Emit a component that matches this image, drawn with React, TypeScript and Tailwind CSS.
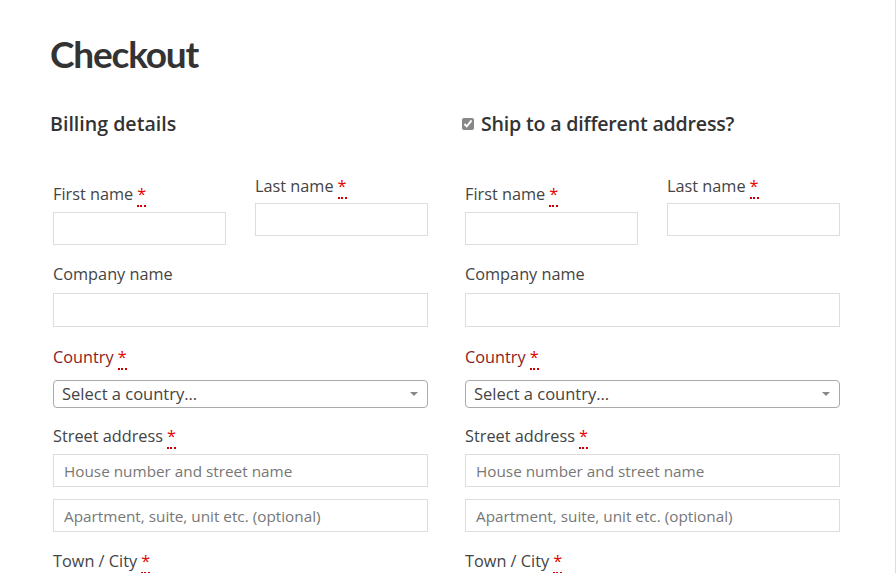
const font = { fontFamily: "'Open Sans', 'Liberation Sans', sans-serif" };
const headFont = { fontFamily: "Lato, 'Open Sans', sans-serif" };

function Req() {
  return (
    <abbr
      title="required"
      className="ml-[4px] text-[#e60000] no-underline border-b-2 border-dotted border-[#c00] leading-none"
    >
      *
    </abbr>
  );
}

function Label({ text, red, req = true }: { text: string; red?: boolean; req?: boolean }) {
  return (
    <label className={`block text-[16.3px] leading-6 ${red ? "text-[#8c1b1b]" : "text-[#444]"}`}>
      {text}
      {req && <Req />}
    </label>
  );
}

function Input({ placeholder, h = "h-[34px]" }: { placeholder?: string; h?: string }) {
  return (
    <input
      placeholder={placeholder}
      className={`block w-full ${h} border border-[#ddd] bg-white px-[10px] text-[15.3px] text-[#444] placeholder:text-[#777] outline-none`}
    />
  );
}

function Column() {
  return (
    <div className="px-[3px]">
      <div className="flex gap-[29px]">
        <div className="w-[173px] pt-[8px]">
          <Label text="First name" />
          <div className="mt-[6px]">
            <Input h="h-[33px]" />
          </div>
        </div>
        <div className="w-[173px]">
          <Label text="Last name" />
          <div className="mt-[5px]">
            <Input h="h-[33px]" />
          </div>
        </div>
      </div>
      <div className="mt-[17px]">
        <Label text="Company name" req={false} />
        <div className="mt-[7px]">
          <Input />
        </div>
      </div>
      <div className="mt-[18px]">
        <Label text="Country" red />
        <div className="mt-[11px] flex h-[28px] items-center justify-between rounded-[4px] border border-[#aaa] pl-[8px] pr-[8px] text-[16.5px] text-[#444]">
          <span>Select a country…</span>
          <svg width="10" height="6" viewBox="0 0 10 6">
            <path d="M1 1h8L5 5z" fill="#888" />
          </svg>
        </div>
      </div>
      <div className="mt-[16px]">
        <Label text="Street address" />
        <div className="mt-[6px]">
          <Input h="h-[33px]" placeholder="House number and street name" />
        </div>
        <div className="mt-[12px]">
          <Input h="h-[33px]" placeholder="Apartment, suite, unit etc. (optional)" />
        </div>
      </div>
      <div className="mt-[17px]">
        <Label text="Town / City" />
      </div>
    </div>
  );
}

export default function App() {
  return (
    <div className="h-[573px] w-[896px] overflow-hidden bg-white border-r border-[#ddd]" style={font}>
      <div className="pl-[50px] pt-[30px]">
        <h1 className="text-[37px] font-bold leading-[48px] tracking-[-1.2px] text-[#333]" style={headFont}>
          Checkout
        </h1>
        <div className="mt-[34px] grid grid-cols-[381px_381px] gap-x-[31px]">
          <div>
            <h3 className="h-[24px] text-[19.6px] font-semibold leading-[24px] text-[#333]">Billing details</h3>
            <div className="mt-[38px]">
              <Column />
            </div>
          </div>
          <div>
            <h3 className="flex h-[24px] items-center text-[19.6px] font-semibold leading-[24px] tracking-[-0.2px] text-[#333]">
              <input type="checkbox" defaultChecked className="mr-[7px] h-[12px] w-[12px] accent-[#888]" />
              Ship to a different address?
            </h3>
            <div className="mt-[38px]">
              <Column />
            </div>
          </div>
        </div>
      </div>
    </div>
  );
}
